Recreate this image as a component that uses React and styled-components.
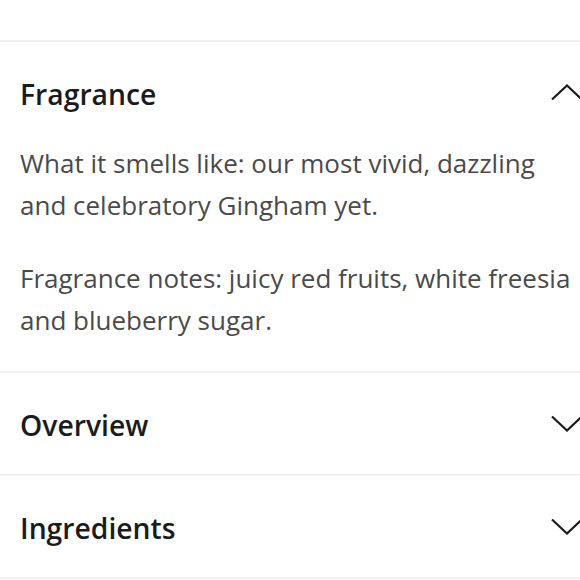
import React, {useState} from 'react';
import styled, {createGlobalStyle} from 'styled-components';

const GlobalStyle = createGlobalStyle`
  body {
    margin: 0;
    background: #fff;
    font-family: "Open Sans", "Noto Sans", sans-serif;
    overflow-x: hidden;
  }
`;

const sections = [
  {
    title: 'Fragrance',
    body: [
      'What it smells like: our most vivid, dazzling and celebratory Gingham yet.',
      'Fragrance notes: juicy red fruits, white freesia and blueberry sugar.',
    ],
  },
  {title: 'Overview', body: []},
  {title: 'Ingredients', body: []},
];

const Chevron = ({open}) => (
  <ChevronIcon width="32" height="17" viewBox="0 0 32 17" open={open}>
    <polyline points="1,1.5 16,15.5 31,1.5" fill="none" stroke="#1b1b1b" strokeWidth="2.2" />
  </ChevronIcon>
);

const App = () => {
  const [openIndex, setOpenIndex] = useState(0);

  return (
    <>
      <GlobalStyle />
      <Accordion>
        <TopSpace />
        {sections.map((section, i) => {
          const open = openIndex === i;
          return (
            <Item key={section.title}>
              <Header onClick={() => setOpenIndex(open ? -1 : i)}>
                <Title>{section.title}</Title>
                <Chevron open={open} />
              </Header>
              {open && (
                <Panel>
                  {section.body.map(text => (
                    <Text key={text}>{text}</Text>
                  ))}
                </Panel>
              )}
            </Item>
          );
        })}
      </Accordion>
    </>
  );
};

const Accordion = styled.div`
  width: 580px;
  overflow: hidden;
`;

const TopSpace = styled.div`
  height: 40px;
  border-bottom: 2px solid #f2f2f2;
`;

const Item = styled.section`
  border-bottom: 2px solid #f2f2f2;
`;

const Header = styled.div`
  height: 101px;
  display: flex;
  align-items: center;
  justify-content: space-between;
  padding-left: 20px;
  cursor: pointer;
`;

const Title = styled.h2`
  margin: 2px 0 0;
  font-size: 28.3px;
  font-weight: 600;
  color: #1b1b1b;
  letter-spacing: 0;
`;

const ChevronIcon = styled.svg`
  flex: none;
  margin-right: -3px;
  transform: ${props => (props.open ? 'rotate(180deg)' : 'none')};
`;

const Panel = styled.div`
  padding: 0 8px 30px 20px;
`;

const Text = styled.p`
  margin: 0 0 32px;
  font-size: 26px;
  line-height: 41.5px;
  color: #4a4a4a;

  &:last-child {
    margin-bottom: 0;
  }
`;

export default App;
